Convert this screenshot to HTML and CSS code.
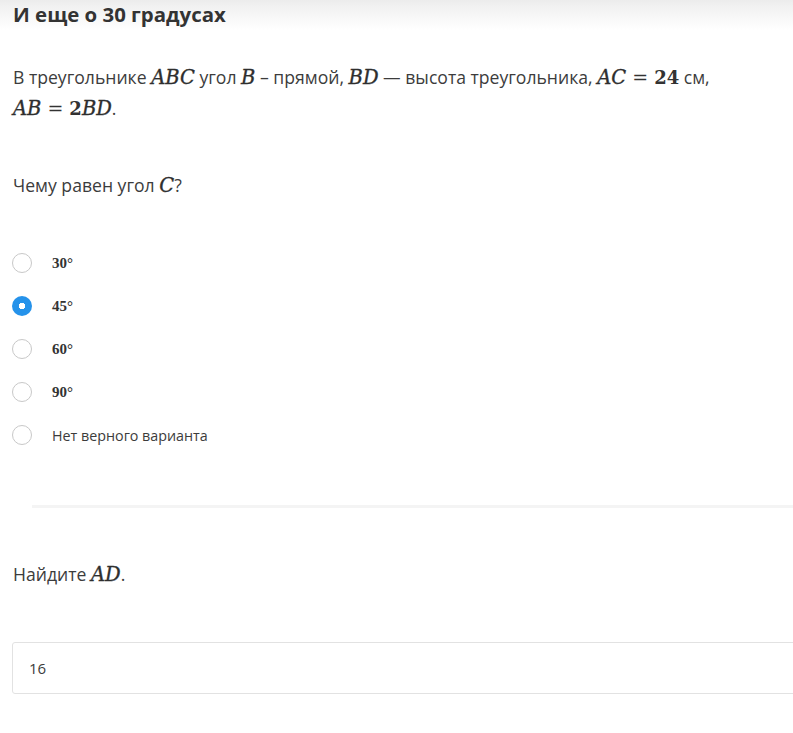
FILE: index.html
```
<!DOCTYPE html>
<html lang="ru">
<head>
    <meta charset="UTF-8">
    <title>И еще о 30 градусах</title>
    <link rel="stylesheet" href="styles.css">
</head>
<body>
    <div class="topbar">
        <h1 class="title">И еще о 30 градусах</h1>
    </div>

    <div class="task">
        <p class="text intro">
            В треугольнике <span class="m">ABC</span> угол <span class="m">B</span> – прямой, <span class="m">BD</span> — высота треугольника, <span class="m">AC</span><span class="eq">=</span><span class="n">24</span> см,
            <span class="nowrap"><span class="m">AB</span><span class="eq">=</span><span class="n">2</span><span class="m">BD</span>.</span>
        </p>

        <p class="text question">Чему равен угол <span class="m">C</span>?</p>

        <div class="options">
            <label class="option">
                <span class="radio"></span>
                <span class="opt-math">30°</span>
            </label>
            <label class="option">
                <span class="radio checked"></span>
                <span class="opt-math">45°</span>
            </label>
            <label class="option">
                <span class="radio"></span>
                <span class="opt-math">60°</span>
            </label>
            <label class="option">
                <span class="radio"></span>
                <span class="opt-math">90°</span>
            </label>
            <label class="option">
                <span class="radio"></span>
                <span class="opt-text">Нет верного варианта</span>
            </label>
        </div>
    </div>

    <div class="divider"></div>

    <div class="task">
        <p class="text find">Найдите <span class="m">AD</span>.</p>
        <div class="answer">16</div>
    </div>
</body>
</html>
```

FILE: styles.css
```
body {
    margin: 0;
    font-family: "Open Sans", "Noto Sans", sans-serif;
    color: #3c3c3c;
    background: #fff;
    overflow: hidden;
}

.topbar {
    height: 30px;
    background: linear-gradient(#ececec 0, #f1f1f1 6px, #fff 30px);
    padding-left: 13px;
}

.title {
    margin: 0;
    font-size: 20.4px;
    font-weight: 700;
    line-height: 28px;
    color: #333;
}

.task {
    padding-left: 13px;
}

.text {
    margin: 0;
    font-size: 17.6px;
    line-height: 30px;
    max-width: 745px;
}

.intro {
    padding-top: 32px;
}

.nowrap {
    white-space: nowrap;
}

.question {
    margin-top: 46px;
}

.m {
    font-family: "DejaVu Serif", serif;
    font-style: italic;
    font-size: 19.5px;
    color: #2e2e2e;
    -webkit-text-stroke: 0.35px #2e2e2e;
}

.n {
    font-family: "DejaVu Serif", serif;
    font-weight: 700;
    font-size: 18px;
    color: #333;
}

.eq {
    font-family: "DejaVu Serif", serif;
    font-size: 19px;
    margin: 0 6px;
    color: #333;
}

.options {
    margin-top: 52px;
    display: flex;
    flex-direction: column;
    gap: 23px;
}

.option {
    display: flex;
    align-items: center;
    gap: 20px;
    height: 20px;
    margin-left: -1px;
}

.radio {
    width: 18px;
    height: 18px;
    border: 1px solid #c8c8c8;
    border-radius: 50%;
    box-sizing: content-box;
}

.radio.checked {
    width: 20px;
    height: 20px;
    border: none;
    background: radial-gradient(circle, #fff 0, #fff 3px, #2592ea 3.5px);
}

.opt-math {
    font-family: "Liberation Serif", serif;
    font-weight: 700;
    font-size: 15px;
    color: #333;
}

.opt-text {
    font-size: 14.3px;
}

.divider {
    height: 3px;
    margin: 60px 0 0 32px;
    background: #f4f4f4;
}

.find {
    padding-top: 51px;
}

.answer {
    margin: 52px -10px 0 -1px;
    height: 50px;
    border: 1px solid #e2e2e2;
    border-radius: 3px;
    padding-left: 16px;
    line-height: 50px;
    font-size: 15px;
}
```
